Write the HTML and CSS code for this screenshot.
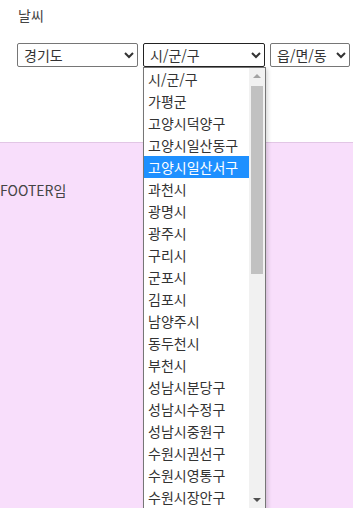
FILE: index.html
```html
<!DOCTYPE html>
<html lang="ko">
<head>
<meta charset="utf-8">
<title>날씨</title>
<link rel="stylesheet" href="styles.css">
</head>
<body>
<div class="page">
  <header class="header">
    <h1 class="title">날씨</h1>
    <div class="selects">
      <select class="sel sel-do"><option>경기도</option></select>
      <div class="sel-wrap">
        <select class="sel sel-si"><option>시/군/구</option></select>
        <div class="dropdown">
          <ul class="options">
            <li class="opt">시/군/구</li>
            <li class="opt">가평군</li>
            <li class="opt">고양시덕양구</li>
            <li class="opt">고양시일산동구</li>
            <li class="opt opt-active">고양시일산서구</li>
            <li class="opt">과천시</li>
            <li class="opt">광명시</li>
            <li class="opt">광주시</li>
            <li class="opt">구리시</li>
            <li class="opt">군포시</li>
            <li class="opt">김포시</li>
            <li class="opt">남양주시</li>
            <li class="opt">동두천시</li>
            <li class="opt">부천시</li>
            <li class="opt">성남시분당구</li>
            <li class="opt">성남시수정구</li>
            <li class="opt">성남시중원구</li>
            <li class="opt">수원시권선구</li>
            <li class="opt">수원시영통구</li>
            <li class="opt">수원시장안구</li>
          </ul>
          <div class="scrollbar">
            <span class="arrow arrow-up"></span>
            <div class="track"><div class="thumb"></div></div>
            <span class="arrow arrow-down"></span>
          </div>
        </div>
      </div>
      <select class="sel sel-dong"><option>읍/면/동</option></select>
    </div>
  </header>
  <footer class="footer">FOOTER임</footer>
</div>
</body>
</html>
```
FILE: styles.css
```css
html, body {
  margin: 0;
  padding: 0;
  overflow: hidden;
  background: #ffffff;
}

body {
  font-family: "Noto Sans CJK KR", "Noto Sans", sans-serif;
  font-size: 14px;
  color: #333333;
}

.page {
  display: flex;
  flex-direction: column;
  min-height: 508px;
}

.header {
  padding: 5px 0 0 17px;
  height: 142px;
  box-sizing: border-box;
}

.title {
  margin: 0 0 17px 1px;
  font-size: 14px;
  font-weight: normal;
  line-height: 21px;
  color: #444444;
}

.selects {
  display: flex;
  gap: 5px;
  align-items: flex-start;
}

.sel {
  font-family: "Noto Sans CJK KR", "Noto Sans", sans-serif;
  font-size: 14px;
  height: 24px;
  line-height: 20px;
  padding: 0 2px;
  color: #333333;
  background: #ffffff;
  border: 1px solid #767676;
  border-radius: 2px;
  box-sizing: border-box;
}

.sel-do { width: 121px; }
.sel-si { width: 122px; border-color: #222222; }
.sel-dong { width: 80px; }

.sel-wrap {
  position: relative;
}

.dropdown {
  position: absolute;
  top: 24px;
  left: 0;
  width: 123px;
  height: 442px;
  box-sizing: border-box;
  border: 1px solid #767676;
  background: #ffffff;
  display: flex;
  overflow: hidden;
  box-shadow: 2px 2px 4px rgba(0, 0, 0, 0.15);
}

.options {
  list-style: none;
  margin: 0;
  padding: 0;
  flex: 1;
}

.opt {
  height: 22px;
  line-height: 22px;
  padding-left: 4px;
  white-space: nowrap;
  color: #333333;
}

.opt-active {
  background: #1e90ff;
  color: #ffffff;
}

.scrollbar {
  width: 16px;
  background: #f1f1f1;
  display: flex;
  flex-direction: column;
  align-items: center;
}

.arrow {
  width: 0;
  height: 0;
  border-left: 4px solid transparent;
  border-right: 4px solid transparent;
  margin: 6px 0;
}

.arrow-up {
  border-bottom: 4px solid #a3a3a3;
}

.arrow-down {
  border-top: 4px solid #505050;
}

.track {
  flex: 1;
  width: 12px;
  padding-top: 2px;
}

.thumb {
  width: 12px;
  height: 188px;
  background: #c1c1c1;
}

.footer {
  flex: 1;
  background: #f8defb;
  border-top: 1px solid #e2c6e5;
  padding-top: 37px;
  line-height: 20px;
  color: #444444;
}
```
